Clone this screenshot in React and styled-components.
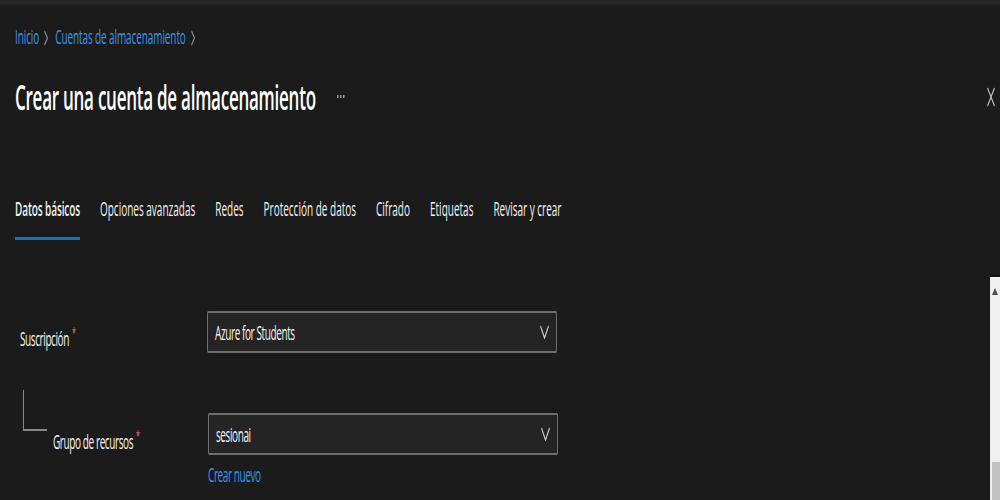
import React from 'react';
import styled, { createGlobalStyle } from 'styled-components';

// The reference is a horizontally squeezed screenshot, so the page is laid out
// at twice the width and compressed with scaleX(0.5).

const GlobalStyle = createGlobalStyle`
  html, body {
    margin: 0;
    padding: 0;
    width: 1000px;
    height: 500px;
    overflow: hidden;
    background: #1b1b1b;
  }
  body {
    font-family: "Open Sans", "Noto Sans", sans-serif;
  }
`;

const Canvas = styled.div`
  width: 2000px;
  height: 500px;
  transform: scaleX(0.5);
  transform-origin: 0 0;
  display: flex;
  flex-direction: column;
  color: #f3f2f1;
`;

const TopStrip = styled.div`
  height: 5px;
  flex-shrink: 0;
  background: #262626;
`;

const Header = styled.header`
  padding: 0 10px 0 30px;
`;

const Breadcrumb = styled.nav`
  display: flex;
  align-items: center;
  margin-top: 19px;
  font-size: 20px;
  line-height: 26px;
  letter-spacing: -0.2px;
`;

const Crumb = styled.a`
  color: #3b94e5;
  text-decoration: none;
`;

const Chevron = styled.svg`
  margin: 2px 14px 0 10px;
  stroke: #8a8886;
  fill: none;
`;

const TitleRow = styled.div`
  display: flex;
  align-items: center;
  margin-top: 25px;
`;

const Title = styled.h1`
  margin: 0;
  font-size: 34px;
  line-height: 44px;
  font-weight: 600;
  letter-spacing: -0.5px;
  color: #ffffff;
`;

const More = styled.svg`
  margin-left: 42px;
  fill: #a19f9d;
`;

const Spacer = styled.div`
  flex: 1;
`;

const Close = styled.svg`
  stroke: #c8c6c4;
  stroke-width: 2;
`;

const Tabs = styled.div`
  display: flex;
  gap: 40px;
  margin-top: 77px;
  padding-left: 30px;
`;

const Tab = styled.div`
  font-size: 20px;
  line-height: 26px;
  padding-bottom: 15px;
  letter-spacing: ${p => (p.$active ? '-0.2px' : '0')};
  font-weight: ${p => (p.$active ? 600 : 400)};
  border-bottom: 3px solid ${p => (p.$active ? '#0078d4' : 'transparent')};
  color: #f3f2f1;
`;

const Main = styled.main`
  flex: 1;
  display: flex;
  margin-top: 34px;
  min-height: 0;
`;

const Form = styled.div`
  flex: 1;
  padding: 37px 0 0 40px;
`;

const Row = styled.div`
  display: flex;
  align-items: flex-start;
  margin-top: ${p => p.$gap || 0}px;
`;

const LabelCell = styled.div`
  width: ${p => p.$width}px;
  display: flex;
  align-items: flex-start;
  flex-shrink: 0;
`;

const Label = styled.span`
  font-size: 20px;
  line-height: 26px;
  letter-spacing: -0.8px;
  margin-top: ${p => p.$top}px;
  margin-left: ${p => p.$left || 0}px;
  color: #f3f2f1;
`;

const Required = styled.span`
  color: #f1707b;
  font-size: 14px;
  vertical-align: super;
  margin-left: 6px;
`;

const Connector = styled.div`
  width: 48px;
  height: 41px;
  margin-left: 6px;
  border-left: 2px solid #8a8886;
  border-bottom: 2px solid #8a8886;
  box-sizing: border-box;
`;

const FieldColumn = styled.div`
  display: flex;
  flex-direction: column;
  margin-top: ${p => p.$top || 0}px;
`;

const Select = styled.div`
  width: 700px;
  height: 42px;
  box-sizing: border-box;
  border: 2px solid #6e6e6e;
  border-radius: 3px;
  background: #242424;
  display: flex;
  align-items: center;
  justify-content: space-between;
  padding: 0 14px;
  font-size: 20px;
  letter-spacing: -0.8px;
  color: #f3f2f1;
`;

const Caret = styled.svg`
  stroke: #d0d0d0;
  stroke-width: 2;
  fill: none;
`;

const Link = styled.a`
  margin-top: 7px;
  font-size: 20px;
  line-height: 26px;
  letter-spacing: -0.8px;
  color: #3b94e5;
  text-decoration: none;
`;

const Scrollbar = styled.div`
  width: 20px;
  flex-shrink: 0;
  background: #f0f0f0;
  border-top: 3px solid #111111;
  display: flex;
  flex-direction: column;
  justify-content: space-between;
`;

const Arrow = styled.div`
  width: 0;
  height: 0;
  margin: 11px auto 0;
  border-left: 6px solid transparent;
  border-right: 6px solid transparent;
  border-bottom: 7px solid #505050;
`;

const Thumb = styled.div`
  height: 38px;
  margin-left: 4px;
  background: #c1c1c1;
`;

const tabs = [
  'Datos básicos',
  'Opciones avanzadas',
  'Redes',
  'Protección de datos',
  'Cifrado',
  'Etiquetas',
  'Revisar y crear',
];

function Sep() {
  return (
    <Chevron width="8" height="16" viewBox="0 0 8 16" strokeWidth="2">
      <polyline points="1,1 7,8 1,15" />
    </Chevron>
  );
}

function Dropdown({ value }) {
  return (
    <Select>
      <span>{value}</span>
      <Caret width="18" height="14" viewBox="0 0 18 14">
        <polyline points="1,1 9,13 17,1" />
      </Caret>
    </Select>
  );
}

export default function App() {
  return (
    <>
      <GlobalStyle />
      <Canvas>
        <TopStrip />
        <Header>
          <Breadcrumb>
            <Crumb>Inicio</Crumb>
            <Sep />
            <Crumb>Cuentas de almacenamiento</Crumb>
            <Sep />
          </Breadcrumb>
          <TitleRow>
            <Title>Crear una cuenta de almacenamiento</Title>
            <More width="16" height="4" viewBox="0 0 16 4">
              <rect x="0" y="0" width="3" height="3" />
              <rect x="6" y="0" width="3" height="3" />
              <rect x="12" y="0" width="3" height="3" />
            </More>
            <Spacer />
            <Close width="16" height="20" viewBox="0 0 16 20">
              <line x1="1" y1="1" x2="15" y2="19" />
              <line x1="15" y1="1" x2="1" y2="19" />
            </Close>
          </TitleRow>
        </Header>

        <Tabs>
          {tabs.map((t, i) => (
            <Tab key={t} $active={i === 0}>{t}</Tab>
          ))}
        </Tabs>

        <Main>
          <Form>
            <Row>
              <LabelCell $width={374}>
                <Label $top={9}>
                  Suscripción<Required>*</Required>
                </Label>
              </LabelCell>
              <Dropdown value="Azure for Students" />
            </Row>
            <Row $gap={37}>
              <LabelCell $width={376}>
                <Connector />
                <Label $top={33} $left={12}>
                  Grupo de recursos<Required>*</Required>
                </Label>
              </LabelCell>
              <FieldColumn $top={23}>
                <Dropdown value="sesionai" />
                <Link>Crear nuevo</Link>
              </FieldColumn>
            </Row>
          </Form>
          <Scrollbar>
            <Arrow />
            <Thumb />
          </Scrollbar>
        </Main>
      </Canvas>
    </>
  );
}
